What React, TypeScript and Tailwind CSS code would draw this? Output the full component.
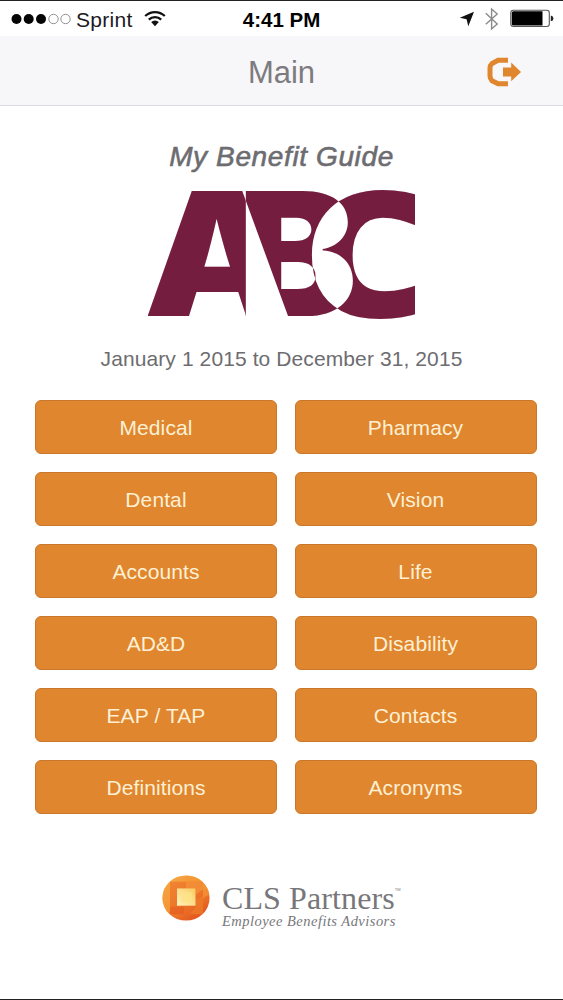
import type { FC } from "react";

const MENU_ITEMS = [
  "Medical",
  "Pharmacy",
  "Dental",
  "Vision",
  "Accounts",
  "Life",
  "AD&D",
  "Disability",
  "EAP / TAP",
  "Contacts",
  "Definitions",
  "Acronyms",
];

const StatusBar: FC = () => (
  <div className="grid h-[35px] grid-cols-3 items-center bg-white text-[21px] leading-none text-[#1c1a1f]">
    <div className="flex items-center pl-[11px]">
      <svg width="60" height="12" viewBox="0 0 60 12" className="shrink-0">
        {[5.5, 17.7, 30].map((cx) => (
          <circle key={cx} cx={cx} cy="6" r="5" fill="#050505" />
        ))}
        {[42.5, 54.5].map((cx) => (
          <circle key={cx} cx={cx} cy="6" r="4.7" fill="none" stroke="#777" strokeWidth="0.8" />
        ))}
      </svg>
      <span className="ml-[5px] pt-[2px] tracking-[0.3px]">Sprint</span>
      <svg width="22" height="17" viewBox="0 0 22 17" className="ml-[11px] shrink-0">
        <g fill="none" stroke="#111" strokeWidth="2.3">
          <path d="M1.2 6 A14.2 14.2 0 0 1 20.8 6" />
          <path d="M4.8 9.7 A9 9 0 0 1 17.2 9.7" />
        </g>
        <path d="M7.2 12.1 A5.5 5.5 0 0 1 14.8 12.1 L11 16.2 Z" fill="#111" />
      </svg>
    </div>
    <div className="pt-[3px] text-center text-[20.5px] font-bold text-black">4:41 PM</div>
    <div className="flex items-center justify-end pr-[9px]">
      <svg width="16" height="16" viewBox="0 0 16 16">
        <path d="M15 0.8 L9.3 15.2 L7.6 8.2 L0.8 6.7 Z" fill="#111" />
      </svg>
      <svg width="16" height="24" viewBox="0 0 16 24" className="ml-[9px]">
        <path
          d="M1.8 6.3 L13.2 17 L7.6 22 V2 L13.2 7 L1.8 17.3"
          fill="none"
          stroke="#8b8b8b"
          strokeWidth="1.4"
        />
      </svg>
      <svg width="44" height="19" viewBox="0 0 44 19" className="ml-[10px]">
        <rect x="0.8" y="1.2" width="38.5" height="16.3" rx="2.5" fill="white" stroke="#555" strokeWidth="1.1" />
        <path d="M3.5 2.2 H32.5 V16.5 H3.5 Q1.8 16.5 1.8 15 V3.7 Q1.8 2.2 3.5 2.2 Z" fill="black" />
        <path d="M40.8 6.6 Q43.4 7 43.4 9.4 Q43.4 11.8 40.8 12.2 Z" fill="#222" />
      </svg>
    </div>
  </div>
);

const NavBar: FC = () => (
  <div className="grid h-[70px] grid-cols-3 items-center border-b border-[#dcdade] bg-[#f7f6f9] pt-[3px]">
    <div />
    <h1 className="text-center text-[31px] leading-none text-[#7d7b80]">Main</h1>
    <button className="justify-self-end pr-[41px]" aria-label="Log out">
      <svg width="36" height="30" viewBox="0 0 36 30">
        <path d="M22 3.2 H12 L6 6.5 Q4 8.5 4 11 V19 Q4 21.5 6 23.7 L12 26.8 H22" fill="none" stroke="#e0862e" strokeWidth="5" />
        <path d="M17 10.6 H25.2 V5.6 L35 14.9 L25.2 24.2 V19.4 H17 Z" fill="#e0862e" />
      </svg>
    </button>
  </div>
);

// Overlapping letters cancel each other out, then everything dark is tinted maroon.
const CompanyLogo: FC = () => (
  <svg
    width="267"
    height="132"
    viewBox="0 0 267 132"
    className="isolate overflow-hidden"
    fontFamily="Inter, sans-serif"
    fontWeight="900"
    fontSize="100"
  >
    <rect width="267" height="132" fill="white" />
    <g fill="white">
      <text className="mix-blend-difference" transform="matrix(1.87 0 0 1.72 -4.5 128)">A</text>
      <text className="mix-blend-difference" transform="matrix(1.79 0 0 1.72 89.5 128)">B</text>
      <text
        className="mix-blend-difference"
        transform="matrix(2.05 0 0 1.76 153.5 128.5)"
        fontFamily="Open Sans, sans-serif"
        fontWeight="800"
      >
        C
      </text>
    </g>
    <rect className="mix-blend-screen" width="267" height="132" fill="#741d3e" />
  </svg>
);

const PartnerMark: FC = () => (
  <svg width="48" height="46" viewBox="0 0 48 48" preserveAspectRatio="none" className="shrink-0">
    <defs>
      <linearGradient id="sun" x1="0" y1="0" x2="0.7" y2="1">
        <stop offset="0" stopColor="#f8b04a" />
        <stop offset="0.55" stopColor="#f28a30" />
        <stop offset="1" stopColor="#e2521f" />
      </linearGradient>
      <linearGradient id="core" x1="0" y1="1" x2="1" y2="0">
        <stop offset="0" stopColor="#fff3bd" />
        <stop offset="1" stopColor="#fbcb62" />
      </linearGradient>
      <clipPath id="disc">
        <circle cx="24" cy="24" r="23.6" />
      </clipPath>
    </defs>
    <g clipPath="url(#disc)">
      <rect width="48" height="48" fill="url(#sun)" />
      <path d="M0 14 L8 10 V38 L0 44 Z" fill="#f7a040" opacity="0.5" />
      <path d="M24 0 H48 V20 L41 24 V8 H24 Z" fill="#f79a35" opacity="0.6" />
      <rect x="8" y="7" width="33" height="34" fill="#ea6a25" opacity="0.55" />
      <path d="M24 7 H41 V15 L34 20 V14 H24 Z" fill="#f59a3c" opacity="0.6" />
      <path d="M34 26 L41 22 V41 H28 L34 33 Z" fill="#f18a2c" opacity="0.45" />
      <path d="M8 33 H22 V41 H8 Z" fill="#e4581f" opacity="0.5" />
      <rect x="15" y="14" width="18.5" height="18" fill="url(#core)" />
      <path d="M19 18 H30 V29 H19 Z" fill="#fde488" opacity="0.7" />
    </g>
  </svg>
);

const PartnerLogo: FC = () => (
  <div className="flex items-start pl-[162px] font-['Liberation_Serif',serif] text-[#77777b]">
    <PartnerMark />
    <div className="ml-[12px] pt-[7px]">
      <div className="flex items-start text-[32px] leading-[32px] tracking-[0.1px] whitespace-nowrap">
        CLS Partners
        <span className="pt-[6px] font-['Liberation_Sans',sans-serif] text-[4px] leading-none">TM</span>
      </div>
      <div className="text-[14.5px] leading-[15px] tracking-[0.47px] whitespace-nowrap italic">
        Employee Benefits Advisors
      </div>
    </div>
  </div>
);

const App: FC = () => (
  <div className="flex h-[1000px] w-[563px] flex-col overflow-hidden border-y border-[#222126] bg-white font-['Liberation_Sans',Arial,sans-serif]">
    <StatusBar />
    <NavBar />

    <main className="flex flex-1 flex-col">
      <h2 className="mt-[35px] text-center text-[28px] leading-[32px] tracking-[0.62px] text-[#6d6c70] italic [-webkit-text-stroke:0.6px_#6d6c70]">
        My Benefit Guide
      </h2>
      <div className="mt-[15px] pl-[148px]">
        <CompanyLogo />
      </div>
      <p className="mt-[23px] text-center text-[21px] leading-[32px] tracking-[0.1px] text-[#6d6c70]">
        January 1 2015 to December 31, 2015
      </p>

      <div className="mt-[24.5px] grid grid-cols-2 gap-x-[17.5px] gap-y-[17.5px] pr-[26.5px] pl-[35px]">
        {MENU_ITEMS.map((item) => (
          <button
            key={item}
            className="h-[54.5px] rounded-md border border-[#c9772b] bg-[#e0862e] pt-[2px] text-[21px] leading-none tracking-[0.1px] text-[#fdf0d4]"
          >
            {item}
          </button>
        ))}
      </div>

      <div className="mt-[61px]">
        <PartnerLogo />
      </div>
    </main>
  </div>
);

export default App;
